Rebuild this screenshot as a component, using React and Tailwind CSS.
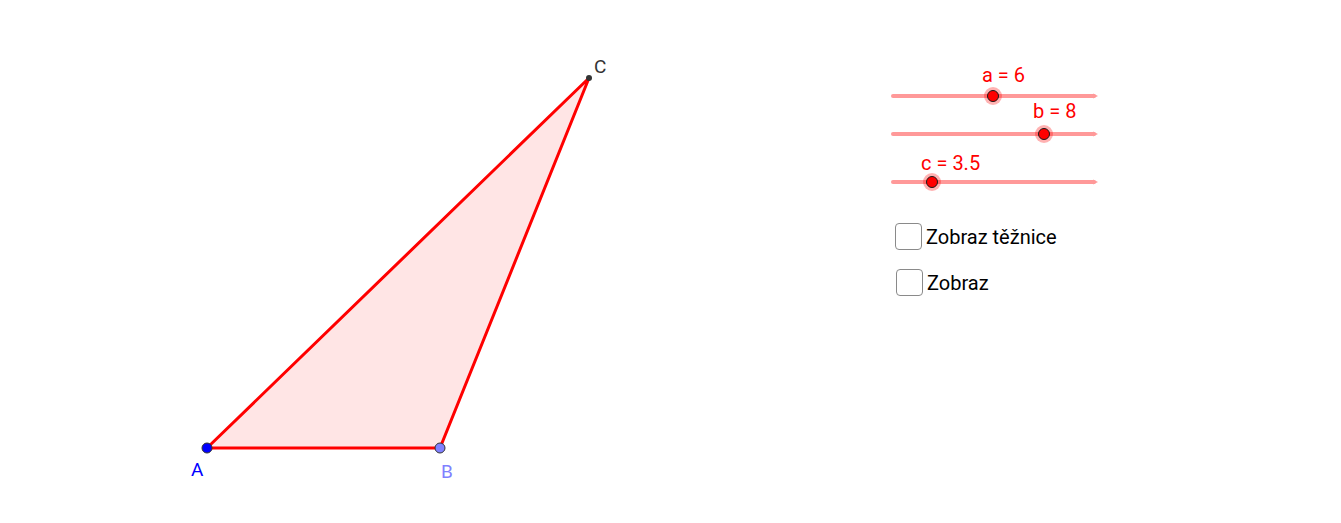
import React from "react";

// GeoGebra-like applet: triangle canvas + sliders & checkboxes
const sliders = [
  { name: "a", value: "6", pos: 993, labelGap: 0, trackGap: 6 },
  { name: "b", value: "8", pos: 1044, labelGap: 0, trackGap: 8 },
  { name: "c", value: "3.5", pos: 932, labelGap: 14, trackGap: 4 },
];

const TRACK_X = 892;
const TRACK_W = 206;

function Slider({ s }) {
  const px = s.pos - TRACK_X;
  return (
    <div className="flex flex-col" style={{ marginTop: s.labelGap }}>
      <div
        className="h-5 text-[20px] leading-5 text-[#ff0000] whitespace-nowrap"
        style={{ marginLeft: px - 11 }}
      >
        {s.name} = {s.value}
      </div>
      <svg width={TRACK_W} height="10" className="overflow-visible" style={{ marginTop: s.trackGap }}>
        <line x1="1" y1="5" x2={TRACK_W - 4} y2="5" stroke="#ff9999" strokeWidth="4" strokeLinecap="round" />
        <path d={`M${TRACK_W - 5} 2.5 L${TRACK_W} 5 L${TRACK_W - 5} 7.5 Z`} fill="#ff9999" />
        <circle cx={px} cy="5" r="9" fill="#ff0000" fillOpacity="0.3" />
        <circle cx={px} cy="5" r="5.5" fill="#ff0000" stroke="#1a1a1a" strokeWidth="1" />
      </svg>
    </div>
  );
}

function Check({ label, className }) {
  return (
    <label className={`flex items-center gap-1 ${className}`}>
      <span className="h-[27px] w-[27px] shrink-0 rounded-[4px] border border-[#8a8a8a] bg-white" />
      <span className="text-[20px] leading-none text-black">{label}</span>
    </label>
  );
}

export default function App() {
  return (
    <div
      className="flex h-[523px] w-[1341px] overflow-hidden bg-white"
      style={{ fontFamily: "Roboto, 'Noto Sans', sans-serif" }}
    >
      <svg width={TRACK_X} height="523" className="shrink-0">
        <polygon points="207,448 440,448 589,78" fill="#ff0000" fillOpacity="0.1" />
        <polyline points="207,448 440,448 589,78 207,448" fill="none" stroke="#ff0000" strokeWidth="3" strokeLinejoin="round" />
        <circle cx="207" cy="448" r="5" fill="#0000ff" stroke="#333" strokeWidth="1" />
        <circle cx="440" cy="448" r="5" fill="#8080ff" stroke="#333" strokeWidth="1" />
        <circle cx="589" cy="78" r="3" fill="#333" />
        <text x="594" y="73" fontSize="19" fill="#333">C</text>
        <text x="191" y="476" fontSize="19" fill="#0000ff">A</text>
        <text x="441" y="478" fontSize="19" fill="#8080ff">B</text>
      </svg>
      <div className="flex flex-col pt-[65px]">
        {sliders.map((s) => (
          <Slider key={s.name} s={s} />
        ))}
        <Check label="Zobraz těžnice" className="ml-[3px] mt-[36px]" />
        <Check label="Zobraz" className="ml-[4px] mt-[19px]" />
      </div>
    </div>
  );
}
